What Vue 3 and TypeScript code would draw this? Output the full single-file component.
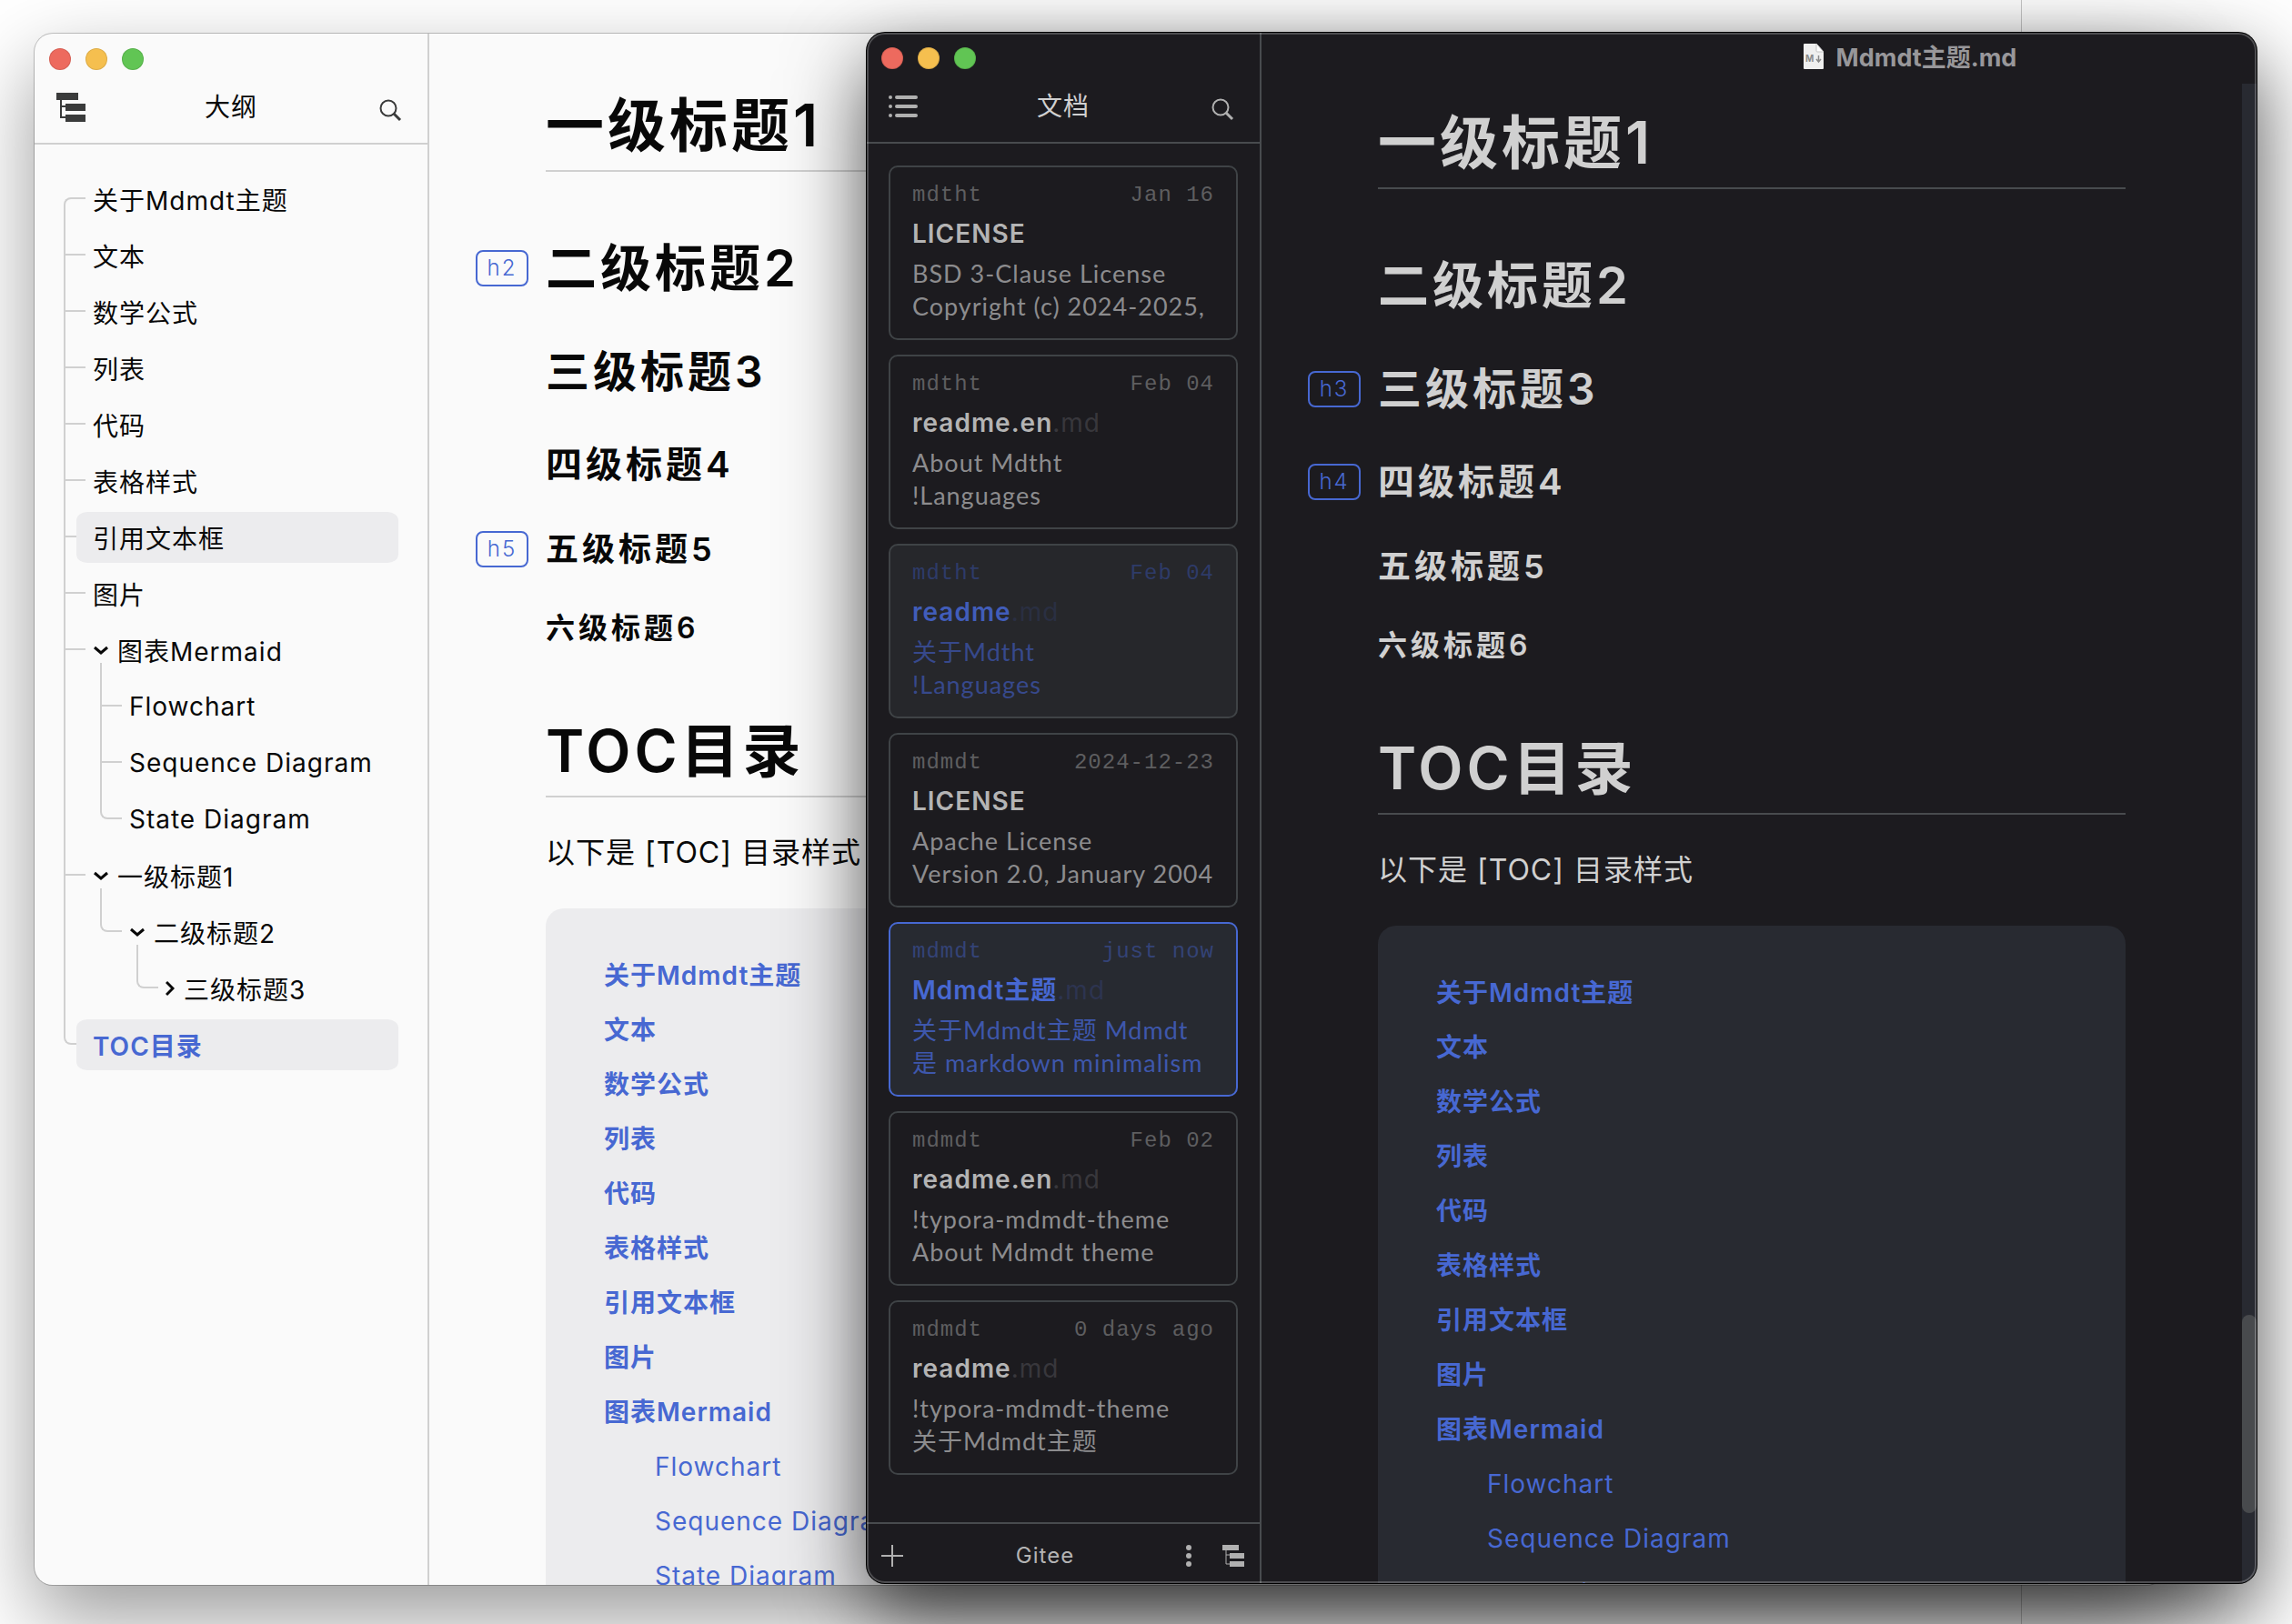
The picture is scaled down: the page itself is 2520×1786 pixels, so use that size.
<script setup lang="ts">
type Theme = 'light' | 'dark'

interface AppWindow {
  theme: Theme
  title: string
  badges: string[]
}

interface Heading {
  tag: string
  text: string
}

interface FileCard {
  folder: string
  date: string
  name: string
  ext: string
  lines: string[]
  state?: 'hover' | 'active'
}

const windows: AppWindow[] = [
  { theme: 'light', title: '大纲', badges: ['h2', 'h5'] },
  { theme: 'dark', title: '文档', badges: ['h3', 'h4'] },
]

const headings: Heading[] = [
  { tag: 'h1', text: '一级标题1' },
  { tag: 'h2', text: '二级标题2' },
  { tag: 'h3', text: '三级标题3' },
  { tag: 'h4', text: '四级标题4' },
  { tag: 'h5', text: '五级标题5' },
  { tag: 'h6', text: '六级标题6' },
  { tag: 'h1', text: 'TOC目录' },
]

const sections: string[] = [
  '关于Mdmdt主题',
  '文本',
  '数学公式',
  '列表',
  '代码',
  '表格样式',
  '引用文本框',
  '图片',
]

const diagrams: string[] = ['Flowchart', 'Sequence Diagram', 'State Diagram']

const files: FileCard[] = [
  { folder: 'mdtht', date: 'Jan 16', name: 'LICENSE', ext: '', lines: ['BSD 3-Clause License', 'Copyright (c) 2024-2025,'] },
  { folder: 'mdtht', date: 'Feb 04', name: 'readme.en', ext: '.md', lines: ['About Mdtht', '!Languages'] },
  { folder: 'mdtht', date: 'Feb 04', name: 'readme', ext: '.md', lines: ['关于Mdtht', '!Languages'], state: 'hover' },
  { folder: 'mdmdt', date: '2024-12-23', name: 'LICENSE', ext: '', lines: ['Apache License', 'Version 2.0, January 2004'] },
  { folder: 'mdmdt', date: 'just now', name: 'Mdmdt主题', ext: '.md', lines: ['关于Mdmdt主题 Mdmdt', '是 markdown minimalism'], state: 'active' },
  { folder: 'mdmdt', date: 'Feb 02', name: 'readme.en', ext: '.md', lines: ['!typora-mdmdt-theme', 'About Mdmdt theme'] },
  { folder: 'mdmdt', date: '0 days ago', name: 'readme', ext: '.md', lines: ['!typora-mdmdt-theme', '关于Mdmdt主题'] },
]
</script>

<template>
  <div class="desktop">
    <div class="desktop-seam"></div>
    <section v-for="win in windows" :key="win.theme" class="window" :class="win.theme">
      <aside class="sidebar">
        <header class="side-head">
          <div class="controls">
            <button type="button" class="control close" aria-label="Close"></button>
            <button type="button" class="control minimise" aria-label="Minimise"></button>
            <button type="button" class="control zoom" aria-label="Zoom"></button>
          </div>
          <div class="toolbar">
            <button type="button" class="icon" aria-label="Switch view">
              <svg v-if="win.theme === 'light'" width="32" height="32" viewBox="0 0 32 32">
                <path d="M0 0h24v8H0zM10 12h22v8H10zM10 24h22v8H10z" fill="currentColor" />
                <path d="M5 8v19h5M5 15h5" fill="none" stroke="currentColor" stroke-width="2" />
              </svg>
              <svg v-else width="32" height="32" viewBox="0 0 32 32">
                <path d="M9 6h21M9 16h21M9 26h21" stroke="currentColor" stroke-width="4" stroke-linecap="round" />
                <path d="M2 6h0M2 16h0M2 26h0" stroke="currentColor" stroke-width="4" stroke-linecap="round" />
              </svg>
            </button>
            <span class="side-title">{{ win.title }}</span>
            <button type="button" class="icon" aria-label="Search">
              <svg width="32" height="32" viewBox="0 0 32 32" fill="none" stroke="currentColor">
                <circle cx="13" cy="17" r="8.5" stroke-width="2" />
                <path d="M19 23l7 7" stroke-width="3" />
              </svg>
            </button>
          </div>
        </header>

        <nav v-if="win.theme === 'light'" class="outline" aria-label="Outline">
          <ul class="tree">
            <li v-for="name in sections" :key="name">
              <a href="#" class="node" :class="{ hovered: name === '引用文本框' }">{{ name }}</a>
            </li>
            <li>
              <a href="#" class="node">
                <svg class="down" width="18" height="12" viewBox="0 0 18 12"><path d="M2 3l7 6 7-6" /></svg>图表Mermaid
              </a>
              <ul>
                <li v-for="name in diagrams" :key="name"><a href="#" class="node">{{ name }}</a></li>
              </ul>
            </li>
            <li>
              <a href="#" class="node">
                <svg class="down" width="18" height="12" viewBox="0 0 18 12"><path d="M2 3l7 6 7-6" /></svg>一级标题1
              </a>
              <ul>
                <li>
                  <a href="#" class="node">
                    <svg class="down" width="18" height="12" viewBox="0 0 18 12"><path d="M2 3l7 6 7-6" /></svg>二级标题2
                  </a>
                  <ul>
                    <li>
                      <a href="#" class="node">
                        <svg class="right" width="10" height="18" viewBox="0 0 10 18"><path d="M1 2l7 7-7 7" /></svg>三级标题3
                      </a>
                    </li>
                  </ul>
                </li>
              </ul>
            </li>
            <li><a href="#" class="node current">TOC目录</a></li>
          </ul>
        </nav>

        <template v-else>
          <div class="files">
            <a v-for="(file, i) in files" :key="i" href="#" class="card" :class="file.state">
              <span class="meta"><span>{{ file.folder }}</span><span>{{ file.date }}</span></span>
              <span class="name">{{ file.name }}<span class="ext">{{ file.ext }}</span></span>
              <span class="excerpt"><span v-for="line in file.lines" :key="line">{{ line }}</span></span>
            </a>
          </div>
          <footer class="side-foot">
            <button type="button" class="icon" aria-label="New file">
              <svg width="24" height="24" viewBox="0 0 24 24"><path d="M12 0v24M0 12h24" stroke="currentColor" stroke-width="2" /></svg>
            </button>
            <span class="folder">Gitee</span>
            <button type="button" class="icon" aria-label="More">
              <svg width="8" height="24" viewBox="0 0 8 24" fill="currentColor">
                <circle cx="4" cy="3" r="3" /><circle cx="4" cy="12" r="3" /><circle cx="4" cy="21" r="3" />
              </svg>
            </button>
            <button type="button" class="icon" aria-label="File tree">
              <svg width="24" height="24" viewBox="0 0 24 24">
                <path d="M0 0h18v6H0zM8 9h16v6H8zM8 18h16v6H8z" fill="currentColor" />
                <path d="M4 6v15h4M4 11h4" fill="none" stroke="currentColor" />
              </svg>
            </button>
          </footer>
        </template>
      </aside>

      <div class="pane">
        <header v-if="win.theme === 'dark'" class="titlebar">
          <svg width="22" height="28" viewBox="0 0 22 28">
            <path d="M1 0h13l8 9v18a1 1 0 0 1-1 1H1a1 1 0 0 1-1-1V1a1 1 0 0 1 1-1z" fill="#efefef" />
            <path d="M14 0v8a1 1 0 0 0 1 1h7z" fill="#ffffff" stroke="#c4c4c4" stroke-width="1" />
            <text x="2" y="20" font-family="Inter, sans-serif" font-size="10" font-weight="700" fill="#8a8a8a">M</text>
            <path d="M16.500 13v6M14 17l2.500 3 2.500-3" fill="none" stroke="#8a8a8a" stroke-width="1.500" />
          </svg>
          <span>Mdmdt主题.md</span>
        </header>
        <div class="scroller">
          <article class="doc">
            <component :is="h.tag" v-for="h in headings" :key="h.text" class="heading">
              <span v-if="win.badges.includes(h.tag)" class="badge">{{ h.tag }}</span>{{ h.text }}
            </component>
            <p>以下是 [TOC] 目录样式</p>
            <nav class="toc" aria-label="Contents">
              <ul>
                <li v-for="name in sections" :key="name"><a href="#">{{ name }}</a></li>
                <li>
                  <a href="#">图表Mermaid</a>
                  <ul>
                    <li v-for="name in diagrams" :key="name"><a href="#">{{ name }}</a></li>
                  </ul>
                </li>
              </ul>
            </nav>
          </article>
          <div v-if="win.theme === 'dark'" class="track"><div class="thumb"></div></div>
        </div>
      </div>
    </section>
  </div>
</template>

<style>
body {
  margin: 0;
  background: #ffffff;
}
</style>

<style scoped>
.desktop {
  position: relative;
  height: 100vh;
  overflow: hidden;
  background: #ffffff;
  font-family: Inter, 'Noto Sans CJK SC', sans-serif;
  letter-spacing: 1px;
}

.desktop-seam {
  position: absolute;
  top: 0;
  bottom: 0;
  right: 297px;
  width: 1px;
  background: #c8c8c8;
}

ul {
  list-style: none;
  margin: 0;
  padding: 0;
}

a {
  color: inherit;
  text-decoration: none;
}

button {
  padding: 0;
  border: 0;
  background: none;
  color: inherit;
}

svg {
  display: block;
}

.window {
  position: absolute;
  display: flex;
  border-radius: 20px;
  overflow: hidden;
  background: var(--bg);
  color: var(--text);
}

.window.light {
  --bg: #fafafa;
  --line: #d0d0d0;
  --text: #080808;
  --icon: #3a3b3b;
  --panel: #ececee;
  --accent: #4768d2;
  top: 37px;
  bottom: 43px;
  left: 38px;
  right: 140px;
  box-shadow: 0 0 0 1px rgba(0, 0, 0, 0.22), 0 36px 90px rgba(0, 0, 0, 0.4);
}

.window.dark {
  --bg: #1c1b1f;
  --line: #484b4e;
  --text: #d0d0d0;
  --icon: #b0b0b0;
  --panel: #282a31;
  --accent: #4768d2;
  top: 36px;
  bottom: 45px;
  left: 953px;
  right: 39px;
  box-shadow: 0 0 0 1px #000000, 0 34px 88px rgba(0, 0, 0, 0.7);
}

.window.dark::after {
  content: '';
  position: absolute;
  inset: 0;
  border: 2px solid rgba(255, 255, 255, 0.22);
  border-radius: 20px;
  pointer-events: none;
}

/* Sidebar */
.sidebar {
  flex: none;
  display: flex;
  flex-direction: column;
  width: 432px;
  border-right: 2px solid var(--line);
}

.side-head {
  border-bottom: 2px solid var(--line);
}

.controls {
  display: flex;
  gap: 16px;
  padding: 16px 16px 0;
}

.control {
  width: 24px;
  height: 24px;
  border-radius: 50%;
  box-shadow: inset 0 0 0 1px rgba(0, 0, 0, 0.1);
}

.close {
  background: #ed6a5e;
}

.minimise {
  background: #f5bf4f;
}

.zoom {
  background: #61c554;
}

.toolbar {
  display: flex;
  align-items: center;
  justify-content: space-between;
  height: 78px;
  padding: 2px 24px 0;
}

.icon {
  color: var(--icon);
}

.side-title {
  font-size: 28px;
  line-height: 40px;
}

/* Outline tree */
.outline {
  padding: 29px 32px;
}

.tree {
  font-size: 28px;
}

.tree li {
  position: relative;
}

.tree li::before {
  content: '';
  position: absolute;
  top: 0;
  bottom: 0;
  left: 0;
  width: 22px;
  border-left: 2px solid var(--line);
}

.tree li::after {
  content: '';
  position: absolute;
  top: 29px;
  left: 2px;
  width: 22px;
  border-top: 2px solid var(--line);
}

.tree > li:first-child::before {
  top: 29px;
  border-top: 2px solid var(--line);
  border-top-left-radius: 8px;
}

.tree li:last-child::before {
  bottom: auto;
  height: 29px;
  border-bottom: 2px solid var(--line);
  border-bottom-left-radius: 8px;
}

.tree > li:first-child::after,
.tree li:last-child::after {
  display: none;
}

.tree ul {
  margin-left: 40px;
}

.tree ul > li:first-child::before {
  top: -17px;
}

.tree ul > li:first-child:last-child::before {
  height: 46px;
}

.node {
  position: relative;
  z-index: 1;
  display: flex;
  align-items: center;
  height: 56px;
  margin-left: 14px;
  padding-left: 18px;
  border: solid transparent;
  border-width: 3px 0;
  border-radius: 12px;
  background-clip: padding-box;
  white-space: nowrap;
}

.node svg {
  fill: none;
  stroke: currentColor;
  stroke-width: 3;
}

.down {
  margin-right: 9px;
}

.right {
  margin-right: 10px;
}

.hovered,
.current {
  background-color: var(--panel);
}

.current {
  color: var(--accent);
  font-weight: 600;
}

/* File list */
.files {
  flex: 1;
  display: flex;
  flex-direction: column;
  gap: 16px;
  min-height: 0;
  padding: 24px;
}

.card {
  --name: #b4b4b4;
  --excerpt: #8c8c8e;
  --meta: #5e5e60;
  --ext: #38373c;
  display: flex;
  flex-direction: column;
  padding: 11px 24px 17px;
  border: 2px solid #3f4346;
  border-radius: 10px;
  white-space: nowrap;
}

.card.hover {
  --name: #415dba;
  --excerpt: #37498c;
  --meta: #2e3b69;
  --ext: #2a2f42;
  background: #26272b;
}

.card.active {
  --name: #4768d2;
  --excerpt: #3e57ac;
  --meta: #344377;
  --ext: #2d3450;
  background: #272a31;
  border-color: #4768d2;
}

.meta {
  display: flex;
  justify-content: space-between;
  color: var(--meta);
  font-family: 'Liberation Mono', monospace;
  font-size: 24px;
  line-height: 40px;
}

.name {
  color: var(--name);
  font-size: 28px;
  font-weight: 600;
  line-height: 44px;
}

.ext {
  color: var(--ext);
  font-weight: 400;
}

.excerpt {
  display: flex;
  flex-direction: column;
  margin-top: 4px;
  color: var(--excerpt);
  font-family: Lato, 'Noto Sans CJK SC', sans-serif;
  font-size: 27px;
  line-height: 36px;
}

.side-foot {
  display: flex;
  align-items: center;
  height: 61px;
  padding: 4px 17px 0 16px;
  border-top: 2px solid var(--line);
  color: #b4b4b4;
}

.folder {
  flex: 1;
  padding-left: 2px;
  font-size: 24px;
  line-height: 32px;
  text-align: center;
}

.side-foot .icon + .icon {
  margin-left: 33px;
}

/* Editor pane */
.pane {
  flex: 1;
  display: flex;
  flex-direction: column;
  min-width: 0;
}

.titlebar {
  display: flex;
  align-items: center;
  justify-content: center;
  gap: 14px;
  height: 51px;
  margin-left: 332px;
  padding-bottom: 5px;
  color: #98979a;
  font-size: 27px;
  font-weight: 700;
  letter-spacing: 0;
}

.scroller {
  flex: 1;
  display: flex;
  min-height: 0;
  overflow: hidden;
}

.doc {
  flex: 1;
  min-width: 0;
  padding: 16px 128px 0;
}

.light .doc {
  padding-top: 52px;
}

.heading {
  position: relative;
  margin: 36px 0 0;
  font-weight: 600;
  letter-spacing: 4px;
  white-space: nowrap;
}

h1.heading {
  margin-top: 62px;
  border-bottom: 2px solid var(--line);
  font-size: 64px;
  line-height: 98px;
}

h1.heading:first-child {
  margin-top: 0;
}

h2.heading {
  margin-top: 64px;
  font-size: 56px;
  line-height: 84px;
}

h3.heading {
  font-size: 48px;
  line-height: 72px;
}

h4.heading {
  font-size: 40px;
  line-height: 60px;
}

h5.heading {
  font-size: 36px;
  line-height: 54px;
}

h6.heading {
  font-size: 32px;
  line-height: 48px;
}

.badge {
  position: absolute;
  top: 0;
  bottom: 0;
  right: 100%;
  display: flex;
  align-items: center;
  justify-content: center;
  width: 54px;
  height: 36px;
  margin: auto 19px auto 0;
  border: 2px solid var(--accent);
  border-radius: 8px;
  color: var(--accent);
  font-size: 24px;
  font-weight: 300;
  line-height: 36px;
  letter-spacing: 2px;
}

.doc p {
  margin: 35px 0;
  font-size: 32px;
  line-height: 52px;
  white-space: nowrap;
}

.toc {
  padding: 44px 64px;
  border-radius: 20px;
  background: var(--panel);
  color: var(--accent);
  font-size: 28px;
  font-weight: 600;
  line-height: 60px;
}

.toc ul ul {
  padding-left: 56px;
  font-weight: 400;
}

.track {
  flex: none;
  display: flex;
  flex-direction: column;
  justify-content: flex-end;
  width: 16px;
  padding-bottom: 77px;
  background: var(--panel);
}

.thumb {
  height: 218px;
  border-radius: 8px;
  background: #484a4d;
}
</style>
